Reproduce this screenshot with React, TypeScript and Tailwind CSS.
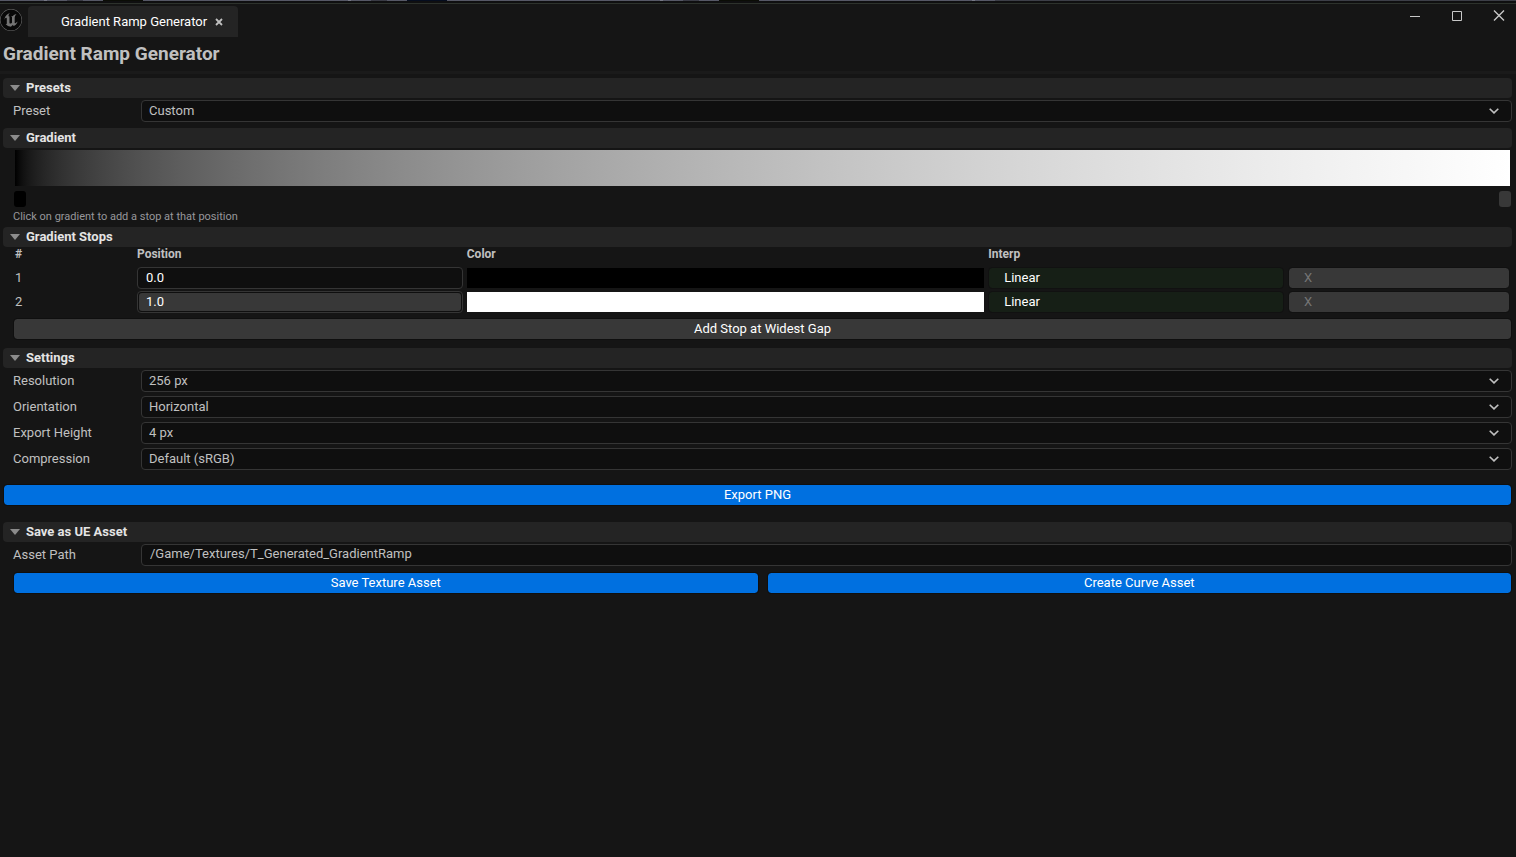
import { useState, type ReactNode } from "react";
import { SiUnrealengine } from "react-icons/si";

function EdgeStrip() {
  return (
    <svg className="block h-1 w-full shrink-0 bg-[#0f0f10]" aria-hidden="true">
      <rect x="0" y="0" width="100%" height="1" fill="#3d3f48" />
      <rect x="0" y="0" width="995" height="1" fill="#565866" />
      <rect x="44" y="0" width="3" height="1" fill="#777986" />
      <rect x="67" y="0" width="16" height="1" fill="#3a3b45" />
      <rect x="103" y="0" width="40" height="1" fill="#0b0d06" />
      <rect x="348" y="0" width="3" height="1" fill="#777986" />
      <rect x="371" y="0" width="16" height="1" fill="#3a3b45" />
      <rect x="407" y="0" width="40" height="1" fill="#050d1f" />
      <rect x="660" y="0" width="3" height="1" fill="#777986" />
      <rect x="683" y="0" width="16" height="1" fill="#3a3b45" />
      <rect x="719" y="0" width="40" height="1" fill="#0b0d06" />
      <rect x="972" y="0" width="3" height="1" fill="#777986" />
      <rect x="0" y="3" width="100%" height="1" fill="#2d322c" />
    </svg>
  );
}

function TitleBar() {
  return (
    <header className="flex h-[33px] shrink-0 items-stretch">
      <div className="flex w-7 items-start pt-[5px]">
        <span className="flex size-[22px] items-center justify-center rounded-full bg-[#080808]">
          <SiUnrealengine className="size-[22px] text-[#747474]" />
        </span>
      </div>
      <div className="mt-0.5 flex w-[210px] items-center rounded-t bg-[#242424] pl-[33px]">
        <span className="whitespace-nowrap text-[13px] text-white">Gradient Ramp Generator</span>
        <button type="button" aria-label="Close tab" className="ml-2 flex size-2 items-center justify-center">
          <svg viewBox="0 0 8 8" className="size-2" fill="none" stroke="#c0c0c0" strokeWidth="1.8">
            <path d="M1 1l6 6M7 1l-6 6" />
          </svg>
        </button>
      </div>
      <div className="ml-auto flex items-start gap-[30px] pr-[11px] pt-1.5">
        <button type="button" aria-label="Minimize" className="size-3">
          <svg viewBox="0 0 12 12" className="size-3" fill="none" stroke="#c8c8c8">
            <path d="M1 6.5h10" />
          </svg>
        </button>
        <button type="button" aria-label="Maximize" className="size-3">
          <svg viewBox="0 0 12 12" className="size-3" fill="none" stroke="#c8c8c8">
            <path d="M1.5 1.5h9v9h-9z" />
          </svg>
        </button>
        <button type="button" aria-label="Close" className="size-3">
          <svg viewBox="0 0 12 12" className="size-3" fill="none" stroke="#c8c8c8" strokeWidth="1.4">
            <path d="M1 0.5l10 10M11 0.5l-10 10" />
          </svg>
        </button>
      </div>
    </header>
  );
}

function Section({ title, children }: { title: string; children: ReactNode }) {
  const [open, setOpen] = useState(true);
  return (
    <section>
      <h2>
        <button
          type="button"
          aria-expanded={open}
          onClick={() => setOpen(!open)}
          className="flex h-5 w-full items-center gap-1.5 rounded bg-[#242424] pl-[7px] text-[13px] font-bold text-[#e4e4e4]"
        >
          <svg viewBox="0 0 10 6" className="h-1.5 w-2.5" fill="#8c8c8c">
            <path d="M0 0h10L5 6z" />
          </svg>
          {title}
        </button>
      </h2>
      {open && <div className="pl-2.5">{children}</div>}
    </section>
  );
}

function SelectRow({ id, label, options }: { id: string; label: string; options: string[] }) {
  return (
    <div className="flex items-center">
      <label htmlFor={id} className="w-32 shrink-0">
        {label}
      </label>
      <div className="grid flex-1 items-center">
        <select
          id={id}
          className="col-start-1 row-start-1 h-[22px] w-full appearance-none rounded border border-[#353535] bg-[#0f0f0f] px-[7px] text-[13px] leading-5 text-[#c0c0c0] outline-none"
        >
          {options.map((o) => (
            <option key={o}>{o}</option>
          ))}
        </select>
        <svg
          viewBox="0 0 10 6"
          className="pointer-events-none col-start-1 row-start-1 mr-[13px] h-1.5 w-2.5 justify-self-end"
          fill="none"
          stroke="#c0c0c0"
          strokeWidth="1.6"
        >
          <path d="M0.7 0.7L5 4.9l4.3-4.2" />
        </svg>
      </div>
    </div>
  );
}

const primary = "h-5 rounded-[3px] bg-[#0070e0] text-[13px] text-white outline outline-1 outline-[#0f0f0f]";

const stops = [
  { n: 1, position: "0.0", swatch: "bg-black", field: "bg-[#0f0f0f]" },
  { n: 2, position: "1.0", swatch: "bg-white", field: "bg-[#383838]" },
];

export default function App() {
  return (
    <div className="flex min-h-screen flex-col bg-[#151515] font-[Roboto,sans-serif] text-[13px] leading-4 text-[#c0c0c0]">
      <EdgeStrip />
      <TitleBar />
      <main className="pr-1">
        <h1 className="flex h-[34px] items-center pl-[3px] text-[19px] font-bold">Gradient Ramp Generator</h1>
        <div className="-mr-1 h-[3px] bg-[#1a1a1a]" />
        <div className="flex flex-col pl-[3px] pt-1">
          <Section title="Presets">
            <div className="pb-1.5 pt-0.5">
              <SelectRow id="preset" label="Preset" options={["Custom"]} />
            </div>
          </Section>

          <Section title="Gradient">
            <div className="pb-0.5 pt-0.5">
              <div className="mx-0.5 h-9 bg-[linear-gradient(to_right_in_srgb-linear,#000,#fff)]" />
              <div className="mx-px mt-[5px] flex justify-between">
                <button type="button" aria-label="Stop 1" className="h-4 w-3 rounded-[3px] bg-black" />
                <button type="button" aria-label="Stop 2" className="h-4 w-3 rounded-[3px] bg-[#383838]" />
              </div>
              <p className="mt-0.5 text-[11px] text-[#97979b]">Click on gradient to add a stop at that position</p>
            </div>
          </Section>

          <Section title="Gradient Stops">
            <table className="w-full table-fixed border-collapse text-left">
              <colgroup>
                <col className="w-[122px]" />
                <col className="w-[22%]" />
                <col />
                <col className="w-[20%]" />
                <col className="w-[226px]" />
              </colgroup>
              <thead className="text-[12px] leading-[14px]">
                <tr>
                  <th className="pb-[5px] pl-0.5 pr-0 pt-0">#</th>
                  <th className="pb-[5px] pl-0.5 pr-0 pt-0">Position</th>
                  <th className="pb-[5px] pl-0.5 pr-0 pt-0">Color</th>
                  <th className="pb-[5px] pl-0.5 pr-0 pt-0">Interp</th>
                  <th className="p-0" aria-label="Remove" />
                </tr>
              </thead>
              <tbody>
                {stops.map((s) => (
                  <tr key={s.n}>
                    <td className="h-6 p-0 pl-0.5">{s.n}</td>
                    <td className="h-6 p-0 px-0.5">
                      <div className="flex h-[22px] rounded border border-[#353535] bg-[#0f0f0f] p-px">
                        <input
                          aria-label={`Position of stop ${s.n}`}
                          defaultValue={s.position}
                          className={`w-full min-w-0 rounded-[3px] px-[7px] text-[13px] text-white outline-none ${s.field}`}
                        />
                      </div>
                    </td>
                    <td className="h-6 p-0 px-0.5">
                      <button type="button" aria-label={`Color of stop ${s.n}`} className={`block h-5 w-full ${s.swatch}`} />
                    </td>
                    <td className="h-6 p-0 px-[3px]">
                      <button type="button" className="block h-5 w-full rounded-[3px] bg-[#161f16] px-[15px] text-left text-white outline outline-1 outline-[#111111]">
                        Linear
                      </button>
                    </td>
                    <td className="h-6 p-0 px-[3px]">
                      <button type="button" disabled className="block h-5 w-full rounded-[3px] bg-[#383838] px-[15px] text-left text-[#757575] outline outline-1 outline-[#111111]">
                        X
                      </button>
                    </td>
                  </tr>
                ))}
              </tbody>
            </table>
            <div className="flex px-px pb-[9px] pt-[5px]">
              <button type="button" className="h-5 flex-1 rounded-[3px] bg-[#383838] text-white outline outline-1 outline-[#0f0f0f]">
                Add Stop at Widest Gap
              </button>
            </div>
          </Section>

          <Section title="Settings">
            <div className="flex flex-col gap-1 pt-0.5">
              <SelectRow id="resolution" label="Resolution" options={["256 px"]} />
              <SelectRow id="orientation" label="Orientation" options={["Horizontal"]} />
              <SelectRow id="export-height" label="Export Height" options={["4 px"]} />
              <SelectRow id="compression" label="Compression" options={["Default (sRGB)"]} />
            </div>
          </Section>

          <div className="flex px-px pb-[17px] pt-[15px]">
            <button type="button" className={`flex-1 ${primary}`}>
              Export PNG
            </button>
          </div>

          <Section title="Save as UE Asset">
            <div className="flex items-center pt-0.5">
              <label htmlFor="asset-path" className="w-32 shrink-0">
                Asset Path
              </label>
              <input
                id="asset-path"
                defaultValue="/Game/Textures/T_Generated_GradientRamp"
                className="h-[22px] min-w-0 flex-1 rounded border border-[#353535] bg-[#0f0f0f] px-2 pb-[3px] text-[13px] text-[#c0c0c0] outline-none"
              />
            </div>
            <div className="flex gap-2.5 px-px pt-[7px]">
              <button type="button" className={`flex-1 ${primary}`}>
                Save Texture Asset
              </button>
              <button type="button" className={`flex-1 ${primary}`}>
                Create Curve Asset
              </button>
            </div>
          </Section>
        </div>
      </main>
    </div>
  );
}
